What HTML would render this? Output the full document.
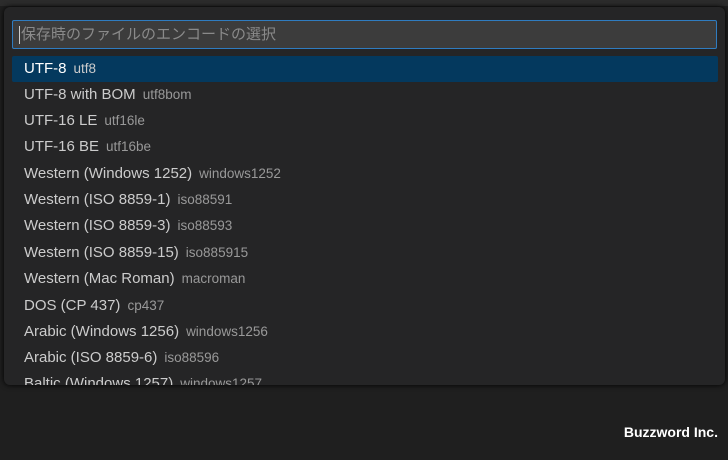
<!DOCTYPE html>
<html><head><meta charset="utf-8"><style>
body{margin:0;width:728px;height:460px;background:#1f1f1f;position:relative;overflow:hidden;font-family:"Liberation Sans","Noto Sans CJK JP",sans-serif}
.top{position:absolute;left:0;top:0;width:728px;height:6px;background:#2c2c2c}
.panel{position:absolute;left:4px;top:7px;width:721px;height:378px;background:#252526;border-radius:6px;box-shadow:0 0 6px #000;overflow:hidden}
.inp{position:absolute;left:8px;top:13px;width:705px;height:29px;background:#3c3c3c;border:1px solid #2f7cc0;border-radius:2px;color:#8a8a8a;font-size:15px;line-height:27px;padding-left:8px;box-sizing:border-box}
.inp:before{content:"";position:absolute;left:6px;top:5px;width:1px;height:18px;background:#ccc}
.row{position:absolute;left:8px;width:706px;height:26px;line-height:26px;color:#ccc;font-size:15px;padding-left:12px;box-sizing:border-box;white-space:nowrap}
.row span{color:#999;font-size:13.5px;margin-left:7px}
.sel{background:#04395e;color:#fff;border-radius:2px}
.sel span{color:#ccc}
.bz{position:absolute;right:10px;top:424px;color:#fff;font-size:14px;font-weight:bold}
</style></head><body>
<div class="top"></div>
<div class="panel">
<div class="inp">保存時のファイルのエンコードの選択</div>
<div class="row sel" style="top:49px">UTF-8<span>utf8</span></div>
<div class="row" style="top:75px">UTF-8 with BOM<span>utf8bom</span></div>
<div class="row" style="top:101px">UTF-16 LE<span>utf16le</span></div>
<div class="row" style="top:127px">UTF-16 BE<span>utf16be</span></div>
<div class="row" style="top:154px">Western (Windows 1252)<span>windows1252</span></div>
<div class="row" style="top:180px">Western (ISO 8859-1)<span>iso88591</span></div>
<div class="row" style="top:206px">Western (ISO 8859-3)<span>iso88593</span></div>
<div class="row" style="top:233px">Western (ISO 8859-15)<span>iso885915</span></div>
<div class="row" style="top:259px">Western (Mac Roman)<span>macroman</span></div>
<div class="row" style="top:286px">DOS (CP 437)<span>cp437</span></div>
<div class="row" style="top:312px">Arabic (Windows 1256)<span>windows1256</span></div>
<div class="row" style="top:338px">Arabic (ISO 8859-6)<span>iso88596</span></div>
<div class="row" style="top:364px">Baltic (Windows 1257)<span>windows1257</span></div>
</div>
<div class="bz">Buzzword Inc.</div>
</body></html>
